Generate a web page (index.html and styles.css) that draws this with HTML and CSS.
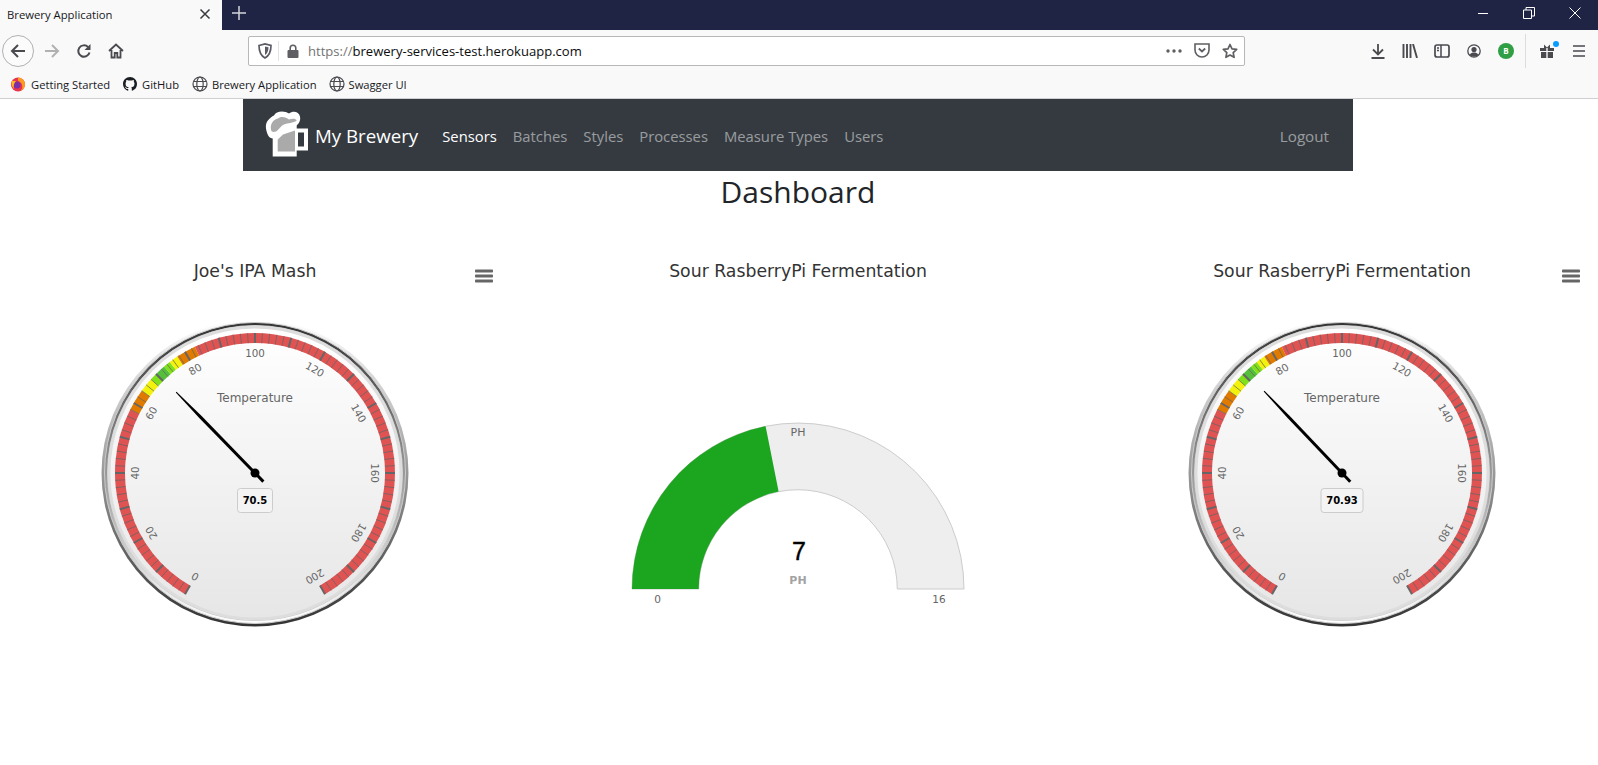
FILE: index.html
```html
<!DOCTYPE html>
<html>
<head>
	<title>Brewery Application</title>
	<link rel="stylesheet" href="styles.css">
</head>
<body>
	<div class="tabstrip">
		<div class="tab">
			<span class="tabtitle">Brewery Application</span>
			<svg class="tabclose" width="12" height="12" viewBox="0 0 12 12"><path d="M1.500 1.500l9 9M10.500 1.500l-9 9" stroke="#3a3a3c" stroke-width="1.500"/></svg>
		</div>
		<svg class="newtab" width="14" height="14" viewBox="0 0 14 14"><path d="M7 0v14M0 7h14" stroke="#d4d5dc" stroke-width="1.500"/></svg>
		<div class="winbtns">
			<svg width="12" height="12" viewBox="0 0 12 12"><path d="M1 6.500h10" stroke="#fff"/></svg>
			<svg width="12" height="12" viewBox="0 0 12 12"><path d="M.5 3h8v8.500h-8zM3 3V.5h8.500V9H8.500" fill="none" stroke="#fff"/></svg>
			<svg width="12" height="12" viewBox="0 0 12 12"><path d="M.5.500l11 11M11.500.500l-11 11" stroke="#fff"/></svg>
		</div>
	</div>

	<div class="toolbar">
		<div class="tool backbtn"><svg width="16" height="16" viewBox="0 0 16 16"><path d="M15 8H2M8 2L2 8l6 6" fill="none" stroke="#4a4a4f" stroke-width="2"/></svg></div>
		<div class="tool"><svg width="16" height="16" viewBox="0 0 16 16"><path d="M1 8h13M8 2l6 6-6 6" fill="none" stroke="#b1b1b3" stroke-width="2"/></svg></div>
		<div class="tool"><svg width="16" height="16" viewBox="0 0 16 16"><path d="M13.500 9.500A5.700 5.700 0 1 1 12 4" fill="none" stroke="#4a4a4f" stroke-width="2"/><path d="M14.500 1v6h-6z" fill="#4a4a4f"/></svg></div>
		<div class="tool"><svg width="16" height="16" viewBox="0 0 16 16"><path d="M1 8l7-6.500L15 8M3.500 7v7.500h3.200V10h2.600v4.500h3.200V7" fill="none" stroke="#4a4a4f" stroke-width="1.800"/></svg></div>
		<div class="urlbar">
			<svg class="shield" width="14" height="16" viewBox="0 0 14 16"><path d="M1 2.500L7 1l6 1.500c0 6-1.500 10-6 12.500C2.500 12.500 1 8.500 1 2.500z" fill="none" stroke="#5b5b66" stroke-width="1.700"/><path d="M7 3.500l3.500.800c0 3-.8 6-3.500 7.700z" fill="#5b5b66"/></svg>
			<span class="urlsep"></span>
			<svg class="lock" width="12" height="14" viewBox="0 0 12 14"><path d="M3.200 6V4a2.800 2.800 0 0 1 5.600 0v2" fill="none" stroke="#5f5f63" stroke-width="1.600"/><rect x="0.500" y="6" width="11" height="8" rx="1" fill="#5f5f63"/></svg>
			<span class="url"><span class="urlscheme">https://</span>brewery-services-test.herokuapp.com</span>
			<svg class="dots" width="16" height="4" viewBox="0 0 16 4"><circle cx="2" cy="2" r="1.700" fill="#5f5f63"/><circle cx="8" cy="2" r="1.700" fill="#5f5f63"/><circle cx="14" cy="2" r="1.700" fill="#5f5f63"/></svg>
			<svg class="pocket" width="16" height="15" viewBox="0 0 16 15"><path d="M1 1h14v6a7 7 0 0 1-14 0z" fill="none" stroke="#5f5f63" stroke-width="1.600"/><path d="M4.800 5.500L8 8.500l3.200-3" fill="none" stroke="#5f5f63" stroke-width="1.800"/></svg>
			<svg class="star" width="16" height="16" viewBox="0 0 16 16"><path d="M8 1.500l2 4.300 4.700.600-3.500 3.200.9 4.700L8 12l-4.100 2.300.9-4.700L1.300 6.400 6 5.800z" fill="none" stroke="#5f5f63" stroke-width="1.700" stroke-linejoin="round"/></svg>
		</div>
		<div class="toolright">
			<div class="tool"><svg width="16" height="16" viewBox="0 0 16 16"><path d="M8 1v10M3 6.500L8 11.500l5-5M1.500 15h13" fill="none" stroke="#4a4a4f" stroke-width="1.800"/></svg></div>
			<div class="tool"><svg width="16" height="14" viewBox="0 0 16 14"><path d="M1.500 0v14M5 0v14M8.500 0v14M11 0l4 14" fill="none" stroke="#4a4a4f" stroke-width="1.900"/></svg></div>
			<div class="tool"><svg width="16" height="14" viewBox="0 0 16 14"><rect x="1" y="1" width="14" height="12" rx="2" fill="none" stroke="#4a4a4f" stroke-width="1.700"/><path d="M7 1v12M3 4h2M3 6.500h2" stroke="#4a4a4f" stroke-width="1.500"/></svg></div>
			<div class="tool"><svg width="14" height="14" viewBox="0 0 14 14"><circle cx="7" cy="7" r="6.200" fill="none" stroke="#4a4a4f" stroke-width="1.300"/><circle cx="7" cy="5.500" r="2.600" fill="#4a4a4f"/><path d="M2.500 11c1-2 3-2.500 4.500-2.500s3.500.5 4.500 2.500c-2 2.200-7 2.200-9 0z" fill="#4a4a4f"/></svg></div>
			<div class="tool"><span class="avatar">B</span></div>
			<span class="toolsep"></span>
			<div class="tool gift"><svg width="14" height="14" viewBox="0 0 14 14"><path d="M0 4h6.300v3H0zM7.700 4H14v3H7.700zM1 8h5.300v6H1zM7.700 8H13v6H7.700z" fill="#4a4a4f"/><path d="M4 .5L7 3.500l3-3v3.500H4z" fill="#4a4a4f"/></svg><span class="giftdot"></span></div>
			<div class="tool"><svg width="14" height="12" viewBox="0 0 14 12"><path d="M1 1h12M1 6h12M1 11h12" stroke="#4a4a4f" stroke-width="1.700"/></svg></div>
		</div>
	</div>

	<div class="bookmarks">
		<div class="bookmark bm-first">
			<svg width="16" height="16" viewBox="0 0 16 16"><circle cx="8" cy="8.500" r="7" fill="#e8344c"/><path d="M8 1.500a7 7 0 0 1 7 7c0 3-2 5.500-4.500 6.500 2-2 2.500-5 1-7.500C10 5 8 6 8 4z" fill="#ff9b1f"/><circle cx="7" cy="9" r="3.500" fill="#7a2ea8"/><path d="M2 5c-1 3 0 6 2 8-1-3 0-6 2-8z" fill="#ffb81c"/></svg>
			<span>Getting Started</span>
		</div>
		<div class="bookmark bm-github">
			<svg width="14" height="14" viewBox="0 0 16 16"><path d="M8 0C3.580 0 0 3.580 0 8c0 3.540 2.290 6.530 5.470 7.590.4.070.55-.17.55-.38 0-.19-.01-.82-.01-1.490-2.010.37-2.530-.49-2.690-.94-.09-.23-.48-.94-.82-1.130-.28-.15-.68-.52-.01-.53.63-.01 1.080.58 1.230.82.720 1.210 1.870.87 2.330.66.070-.52.28-.87.51-1.070-1.780-.2-3.640-.89-3.640-3.950 0-.87.31-1.590.82-2.150-.08-.2-.36-1.020.08-2.120 0 0 .67-.21 2.200.82.640-.18 1.320-.27 2-.27.680 0 1.360.09 2 .27 1.530-1.040 2.200-.82 2.200-.82.440 1.100.16 1.920.08 2.120.51.560.82 1.270.82 2.150 0 3.070-1.870 3.750-3.650 3.950.29.25.54.730.54 1.480 0 1.070-.01 1.930-.01 2.200 0 .21.15.46.55.38A8.013 8.013 0 0 0 16 8c0-4.420-3.580-8-8-8z" fill="#1b1f23"/></svg>
			<span>GitHub</span>
		</div>
		<div class="bookmark bm-app">
			<svg width="16" height="16" viewBox="0 0 16 16"><g fill="none" stroke="#4a4a4f" stroke-width="1.200"><circle cx="8" cy="8" r="7"/><ellipse cx="8" cy="8" rx="3.200" ry="7"/><path d="M1.500 5.500h13M1.500 10.500h13"/></g></svg>
			<span>Brewery Application</span>
		</div>
		<div class="bookmark bm-swagger">
			<svg width="16" height="16" viewBox="0 0 16 16"><g fill="none" stroke="#4a4a4f" stroke-width="1.200"><circle cx="8" cy="8" r="7"/><ellipse cx="8" cy="8" rx="3.200" ry="7"/><path d="M1.500 5.500h13M1.500 10.500h13"/></g></svg>
			<span>Swagger UI</span>
		</div>
	</div>

	<nav class="navbar">
		<svg class="logo" width="46" height="50" viewBox="265 109.500 46 50">
			<path d="M272.700 125V156H296.700V150H308V128H296.700V120z" fill="#fff"/>
			<path d="M298 132h6v14h-6z" fill="#343a40"/>
			<path d="M277.700 139L283 134 295 130V151H277.700z" fill="#aaa"/>
			<path d="M266 128C265 121 270 117 274 115 276 110 285 110 289 113 293 110 299 111 300 116 301 121 298 125 294 126 289 127 284 128 282 130 279 133 277 138 273 138 269 138 267 134 266 128z" fill="#fff"/>
			<path d="M271 129C270 124 273 119 278 118 282 115 286 117 289 119 292 118 296 118 296.700 120 293 123 288 122 284 124 281 125 279 129 276 131 273 132 271 131 271 129z" fill="#aaa"/>
		</svg>
		<a class="brand">My Brewery</a>
		<a class="navlink active">Sensors</a>
		<a class="navlink">Batches</a>
		<a class="navlink">Styles</a>
		<a class="navlink">Processes</a>
		<a class="navlink">Measure Types</a>
		<a class="navlink">Users</a>
		<a class="navlink logout">Logout</a>
	</nav>

	<h1 class="pagetitle">Dashboard</h1>

	<div class="charts">
		<div class="speedometer" data-cx="255" data-title="Joe's IPA Mash" data-value="70.5"></div>
		<div class="semigauge">
			<svg class="chartsvg" width="510" height="400" viewBox="0 0 510 400">
				<text class="charttitle" x="254" y="37">Sour RasberryPi Fermentation</text>
				<path d="M88 349A166 166 0 0 1 420 349H353.300A99.300 99.300 0 0 0 154.700 349z" fill="#eee" stroke="#ccc"/>
				<path d="M88 349A166 166 0 0 1 221.600 186.200L234.600 251.600A99.300 99.300 0 0 0 154.700 349z" fill="#1ca51f"/>
				<text class="semilabel" x="254" y="196">PH</text>
				<text class="semivalue" x="255" y="320">7</text>
				<text class="semiunit" x="254" y="344">PH</text>
				<text class="semilabel small" x="113.500" y="363">0</text>
				<text class="semilabel small" x="395" y="363">16</text>
			</svg>
		</div>
		<div class="speedometer" data-cx="254" data-title="Sour RasberryPi Fermentation" data-value="70.93"></div>
	</div>

	<script src="gauge.js"></script>
</body>
</html>
```

FILE: styles.css
```css
body{margin:0;background-color:#fff;font-family:"Open Sans","Noto Sans",sans-serif;color:#212529;overflow:hidden;}

.tabstrip{display:flex;align-items:center;height:30px;background-color:#1f2344;}
.tab{display:flex;align-items:center;justify-content:space-between;width:222px;height:30px;padding:0 11px 2px 7px;box-sizing:border-box;background-color:#f9f9fa;}
.tabtitle{font-size:11.300px;color:#18181a;}
.newtab{margin-left:10px;margin-bottom:4px;}
.winbtns{display:flex;gap:34px;margin-left:auto;margin-right:17px;margin-bottom:4px;}

.toolbar{display:flex;align-items:center;height:40px;padding-left:2px;padding-top:1px;background-color:#f9f9fa;box-sizing:border-box;}
.tool{position:relative;display:flex;align-items:center;justify-content:center;width:32px;height:32px;flex:none;}
.backbtn{margin-right:2px;border:1px solid #b1b1b3;border-radius:50%;box-sizing:border-box;background-color:#fbfbfb;}
.urlbar{display:flex;align-items:center;width:997px;height:30px;margin-left:116px;box-sizing:border-box;background-color:#fff;border:1px solid #b8b8ba;border-radius:2px;flex:none;}
.shield{margin-left:9px;}
.urlsep{width:1px;height:20px;margin-left:6px;background-color:#e3e3e5;}
.lock{margin-left:8px;}
.url{margin-left:9px;font-size:13.050px;color:#0c0c0d;white-space:nowrap;}
.urlscheme{color:#737373;}
.dots{margin-left:auto;}
.pocket{margin-left:12px;}
.star{margin-left:12px;margin-right:6px;}
.toolright{display:flex;align-items:center;margin-left:117px;}
.avatar{display:flex;align-items:center;justify-content:center;width:16px;height:16px;border-radius:50%;background-color:#2f9e44;color:#fff;font-size:8px;font-weight:700;}
.toolsep{width:1px;height:34px;margin:0 5px 0 3px;background-color:#dcdcde;}
.giftdot{position:absolute;top:6px;right:4px;width:6px;height:6px;border-radius:50%;background-color:#0a9dff;}

.bookmarks{display:flex;align-items:center;height:29px;box-sizing:border-box;background-color:#f9f9fa;border-bottom:1px solid #cfcfd1;font-size:11.200px;color:#18181a;}
.bookmark{display:flex;align-items:center;gap:4px;flex:none;}
.bm-first{margin-left:10px;gap:5px;}
.bm-github{margin-left:13px;gap:5px;}
.bm-app{margin-left:13px;}
.bm-swagger{margin-left:12px;}

.navbar{display:flex;align-items:center;width:1110px;height:72px;margin-left:243px;background-color:#343a40;box-sizing:border-box;padding-left:22px;padding-right:24px;padding-top:1px;}
.logo{flex:none;margin-right:4px;margin-top:-2px;}
.brand{font-size:18.700px;color:#fff;margin-right:24px;}
.navlink{font-size:14.800px;color:rgba(255,255,255,.5);margin-right:16px;}
.navlink.active{color:#fff;}
.logout{margin-left:auto;margin-right:0;font-size:15.200px;}

.pagetitle{margin:0;height:69px;padding:1px 2px 0 0;box-sizing:border-box;text-align:center;font-size:30px;line-height:40px;font-weight:400;}

.charts{display:grid;grid-template-columns:repeat(3,1fr);gap:34px;}
.chartsvg{display:block;}
.charttitle{font-family:"DejaVu Sans",sans-serif;font-size:17.300px;fill:#333;text-anchor:middle;}
.dial-label{font-family:"DejaVu Sans",sans-serif;font-size:10.300px;fill:#666;text-anchor:middle;dominant-baseline:central;}
.dial-name{font-family:"DejaVu Sans",sans-serif;font-size:12px;fill:#666;text-anchor:middle;}
.dial-value{font-family:"DejaVu Sans",sans-serif;font-size:10px;font-weight:700;fill:#000;text-anchor:middle;}
.semilabel{font-family:"DejaVu Sans",sans-serif;font-size:11px;fill:#666;text-anchor:middle;}
.semilabel.small{font-size:10.500px;}
.semivalue{font-family:"Liberation Sans",sans-serif;font-size:25px;fill:#000;stroke:#000;stroke-width:.4px;text-anchor:middle;}
.semiunit{font-family:"DejaVu Sans",sans-serif;font-size:11px;font-weight:700;fill:#a3a3a3;text-anchor:middle;}
```

FILE: gauge.js
```js
var NS = "http://www.w3.org/2000/svg";
var bands = [
	[0, 58, "#df5353"], [58, 64, "#e07b00"], [64, 68, "#f2f20c"], [68, 70, "#80e01a"],
	[70, 73, "#55bf3b"], [73, 75, "#80e01a"], [75, 77.5, "#f2f20c"], [77.5, 83, "#e07b00"],
	[83, 200, "#df5353"]
];

function add(parent, tag, attrs, text)
{
	var el = document.createElementNS(NS, tag);
	for (var k in attrs)
	{
		el.setAttribute(k, attrs[k]);
	}
	if (text != undefined)
	{
		el.textContent = text;
	}
	parent.appendChild(el);
	return el;
}

function gradient(svg, id, stops)
{
	var g = add(svg, "linearGradient", {id: id, x1: 0, y1: 0, x2: 0, y2: 1});
	add(g, "stop", {offset: 0, "stop-color": stops[0]});
	add(g, "stop", {offset: 1, "stop-color": stops[1]});
}

function buildGauge(box, index)
{
	var cx = parseFloat(box.dataset.cx);
	var cy = 233;
	var value = box.dataset.value;

	function pt(r, val)
	{
		var a = (val - 100) * 1.5 * Math.PI / 180;
		return (cx + r * Math.sin(a)).toFixed(2) + " " + (cy - r * Math.cos(a)).toFixed(2);
	}

	var svg = add(box, "svg", {"class": "chartsvg", width: 510, height: 400, viewBox: "0 0 510 400"});
	add(svg, "text", {"class": "charttitle", x: cx, y: 37}, box.dataset.title);

	// hamburger
	for (var i = 0; i < 3; i++)
	{
		add(svg, "rect", {x: cx + 220, y: 29.6 + i * 5, width: 18, height: 3, rx: 0.8, fill: "#666"});
	}

	// pane rings
	var defs = add(svg, "defs", {});
	gradient(defs, "ringa" + index, ["#fff", "#333"]);
	gradient(defs, "ringb" + index, ["#333", "#fff"]);
	gradient(defs, "face" + index, ["#fff", "#e6e6e6"]);
	add(svg, "circle", {cx: cx, cy: cy, r: 153.5, fill: "url(#ringa" + index + ")"});
	add(svg, "circle", {cx: cx, cy: cy, r: 150.5, fill: "url(#ringb" + index + ")", stroke: "#ccc"});
	add(svg, "circle", {cx: cx, cy: cy, r: 147.5, fill: "url(#face" + index + ")", stroke: "#ccc"});
	add(svg, "circle", {cx: cx, cy: cy, r: 146, fill: "none", stroke: "#ddd", "stroke-width": 2.8});

	// colour bands
	bands.forEach(function(b)
	{
		var large = (b[1] - b[0]) * 1.5 > 180 ? 1 : 0;
		add(svg, "path", {
			d: "M" + pt(140, b[0]) + "A140 140 0 " + large + " 1 " + pt(140, b[1]) +
				"L" + pt(130, b[1]) + "A130 130 0 " + large + " 0 " + pt(130, b[0]) + "z",
			fill: b[2]
		});
	});

	// ticks and numbers
	for (var v = 0; v <= 200; v += 2)
	{
		var major = v % 10 == 0;
		add(svg, "path", {
			d: "M" + pt(140, v) + "L" + pt(130, v),
			stroke: "#666",
			"stroke-width": major ? 2 : 1,
			opacity: major ? 1 : 0.75
		});
		if (v % 20 == 0)
		{
			var p = pt(120, v).split(" ");
			add(svg, "text", {
				"class": "dial-label", x: p[0], y: p[1],
				transform: "rotate(" + (v - 100) * 1.5 + " " + p[0] + " " + p[1] + ")"
			}, v);
		}
	}

	add(svg, "text", {"class": "dial-name", x: cx, y: 162}, "Temperature");

	// needle
	var val = parseFloat(value);
	var angle = (val - 100) * 1.5;
	add(svg, "path", {
		d: "M" + (cx - 1.5) + " " + (cy + 12) + "L" + (cx - 1.5) + " " + (cy - 78) + "L" + (cx - 0.5) + " " + (cy - 113) +
			"L" + (cx + 0.5) + " " + (cy - 113) + "L" + (cx + 1.5) + " " + (cy - 78) + "L" + (cx + 1.5) + " " + (cy + 12) + "z",
		fill: "#000",
		transform: "rotate(" + angle + " " + cx + " " + cy + ")"
	});
	add(svg, "circle", {cx: cx, cy: cy, r: 4.5, fill: "#000"});

	// value box
	var rect = add(svg, "rect", {y: 248.5, height: 24, rx: 3, fill: "#f4f4f4", stroke: "#ccc"});
	var label = add(svg, "text", {"class": "dial-value", x: cx, y: 264}, value);
	var w = Math.round(label.getComputedTextLength()) + 10;
	rect.setAttribute("x", cx - w / 2);
	rect.setAttribute("width", w);
}

var boxes = document.querySelectorAll(".speedometer");
for (var n = 0; n < boxes.length; n++)
{
	buildGauge(boxes[n], n);
}
```
